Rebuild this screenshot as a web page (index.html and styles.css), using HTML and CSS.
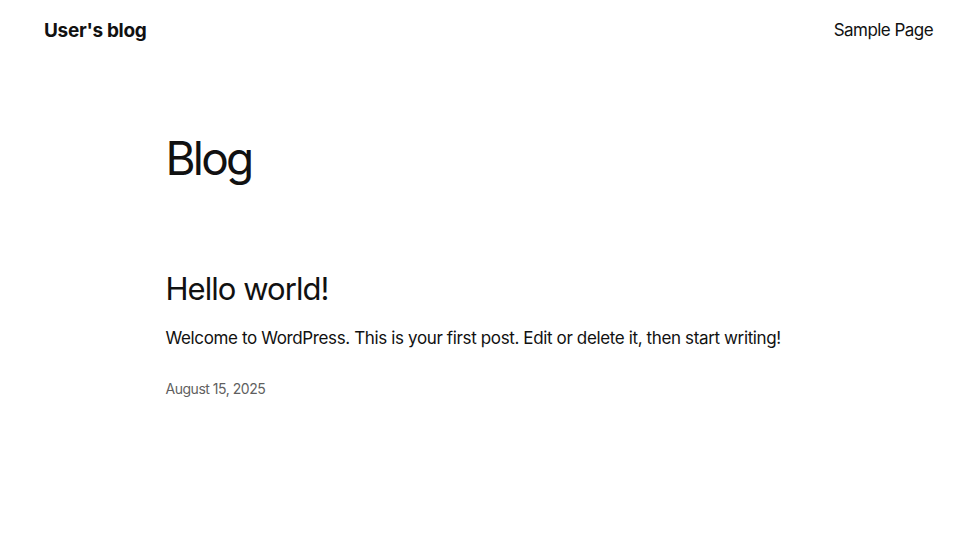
FILE: index.html
```html
<!DOCTYPE html>
<html lang="en">
<head>
  <meta charset="UTF-8">
  <title>User's blog</title>
  <link rel="stylesheet" href="styles.css">
</head>
<body>

  <header class="site-header">
    <a class="site-title" href="#">User's blog</a>
    <nav class="site-nav">
      <a href="#">Sample Page</a>
    </nav>
  </header>

  <main class="content">
    <h1 class="page-title">Blog</h1>

    <article class="post">
      <h2 class="post-title">Hello world!</h2>
      <p class="post-excerpt">Welcome to WordPress. This is your first post. Edit or delete it, then start writing!</p>
      <div class="post-date">August 15, 2025</div>
    </article>
  </main>

</body>
</html>
```

FILE: styles.css
```css
body {
  margin: 0;
  font-family: Inter, "Noto Sans", sans-serif;
  background: #fff;
  color: #111;
}

a {
  color: inherit;
  text-decoration: none;
}

.site-header {
  display: flex;
  justify-content: space-between;
  align-items: center;
  padding: 15px 43px 0 44px;
  height: 30px;
}

.site-title {
  font-size: 19px;
  font-weight: 700;
  letter-spacing: -0.3px;
}

.site-nav {
  font-size: 17px;
  letter-spacing: -0.55px;
}

.content {
  max-width: 645px;
  margin: 0 auto;
  padding-top: 86px;
}

.page-title {
  font-size: 46px;
  font-weight: 400;
  letter-spacing: -2.8px;
  margin: 0;
  line-height: 1.2;
}

.post {
  margin-top: 84px;
}

.post-title {
  font-size: 31px;
  font-weight: 400;
  letter-spacing: -0.95px;
  margin: 0;
  line-height: 1.2;
}

.post-excerpt {
  font-size: 17px;
  letter-spacing: -0.37px;
  margin: 19px 0 0;
  line-height: 1.5;
}

.post-date {
  font-size: 14px;
  color: #5f5f5f;
  letter-spacing: -0.48px;
  margin-top: 28px;
}
```
